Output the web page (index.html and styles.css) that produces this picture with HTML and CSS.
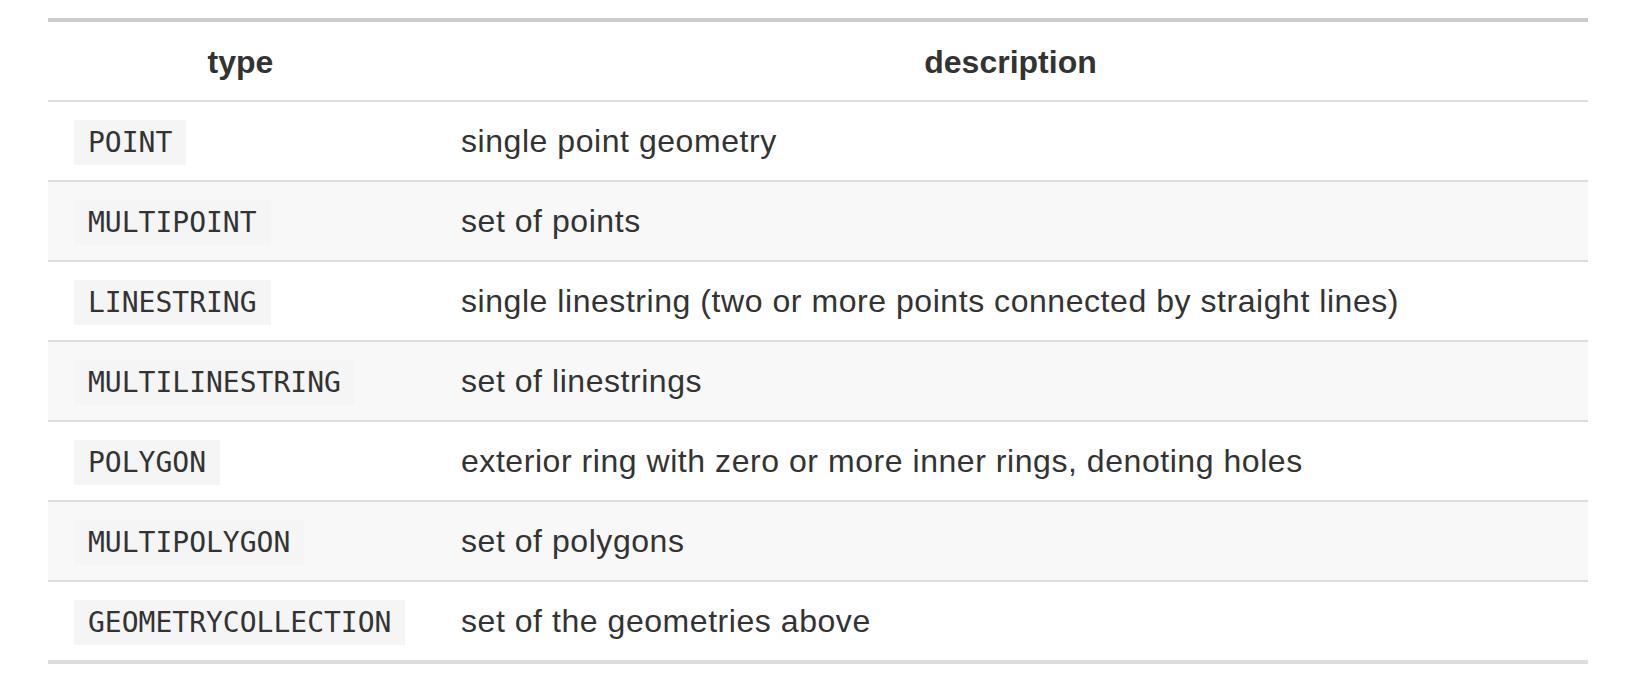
FILE: index.html
```html
<!DOCTYPE html>
<html>
<head>
  <title>Geometry types</title>
  <link rel="stylesheet" href="styles.css">
</head>
<body>
  <div class="page">
    <table class="geomTable">
      <thead>
        <tr>
          <th class="typeCol">type</th>
          <th>description</th>
        </tr>
      </thead>
      <tbody>
        <tr>
          <td><code>POINT</code></td>
          <td class="desc">single point geometry</td>
        </tr>
        <tr>
          <td><code>MULTIPOINT</code></td>
          <td class="desc">set of points</td>
        </tr>
        <tr>
          <td><code>LINESTRING</code></td>
          <td class="desc">single linestring (two or more points connected by straight lines)</td>
        </tr>
        <tr>
          <td><code>MULTILINESTRING</code></td>
          <td class="desc">set of linestrings</td>
        </tr>
        <tr>
          <td><code>POLYGON</code></td>
          <td class="desc">exterior ring with zero or more inner rings, denoting holes</td>
        </tr>
        <tr>
          <td><code>MULTIPOLYGON</code></td>
          <td class="desc">set of polygons</td>
        </tr>
        <tr>
          <td><code>GEOMETRYCOLLECTION</code></td>
          <td class="desc">set of the geometries above</td>
        </tr>
      </tbody>
    </table>
  </div>
</body>
</html>
```

FILE: styles.css
```css
* {
  margin: 0;
  box-sizing: border-box;
}

body {
  background-color: #fff;
  color: #333;
  font-family: "Liberation Sans", Arial, Helvetica, sans-serif;
  font-size: 32px;
}

.page {
  padding: 18px 52px 0 48px;
}

/* table style */
.geomTable {
  width: 100%;
  border-collapse: separate;
  border-spacing: 0;
}

.geomTable th {
  font-weight: bold;
  text-align: center;
  line-height: 48px;
  padding: 16px 26px 14px;
  border-top: 4px solid #ccc;
  border-bottom: 2px solid #ddd;
}

.typeCol {
  width: 385px;
}

.geomTable td {
  text-align: left;
  line-height: 48px;
  height: 80px;
  padding: 15px 26px;
  border-bottom: 2px solid #ddd;
}

.geomTable td.desc {
  padding-left: 28px;
  letter-spacing: 0.55px;
}

.geomTable tbody tr:nth-child(even) td {
  background-color: #f8f8f8;
}

.geomTable tbody tr:last-child td {
  height: 82px;
  border-bottom: 4px solid #ddd;
}

code {
  font-family: "DejaVu Sans Mono", "Liberation Mono", monospace;
  font-size: 28px;
  line-height: 1;
  background-color: #f5f5f5;
  padding: 6px 14px;
}
```
